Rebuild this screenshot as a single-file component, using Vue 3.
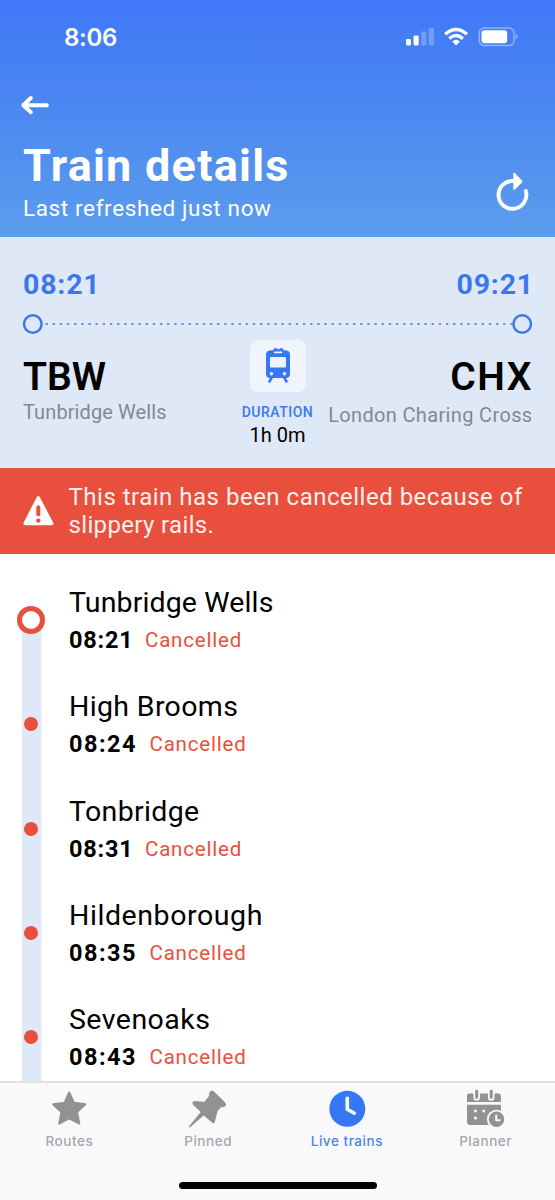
<script setup>
const stops = [
  { name: 'Tunbridge Wells', time: '08:21', cls: 'n1' },
  { name: 'High Brooms', time: '08:24', cls: 'n2' },
  { name: 'Tonbridge', time: '08:31', cls: 'n3' },
  { name: 'Hildenborough', time: '08:35', cls: 'n4' },
  { name: 'Sevenoaks', time: '08:43', cls: 'n5' },
]
</script>

<template>
  <div class="screen">
    <header class="header">
      <div class="status">
        <span class="clock">8:06</span>
        <svg class="status-icons" width="114" height="22" viewBox="0 0 114 22" fill="#fff">
          <rect x="1" y="13" width="5" height="6.5" rx="1.4" />
          <rect x="8.5" y="9.5" width="5.2" height="10" rx="1.4" />
          <g opacity=".25">
            <rect x="16.2" y="5.5" width="5.2" height="14" rx="1.4" />
            <rect x="23.8" y="2" width="5.2" height="17.5" rx="1.4" />
          </g>
          <g fill="none" stroke="#fff" stroke-width="3.4">
            <path d="M40.2 8.3Q51 -1.2 62 8.3" />
            <path d="M44.3 12.6Q51 6.6 57.9 12.6" />
          </g>
          <path d="M47.3 15.6Q51.1 12 54.9 15.6L51.1 19.6Z" />
          <rect x="74.2" y="2" width="34.8" height="17.6" rx="5" fill="none" stroke="#fff" stroke-opacity=".4" stroke-width="1.5" />
          <rect x="76.5" y="4.2" width="25.7" height="13.1" rx="3" />
          <path d="M110.6 7.8Q112.6 8.7 112.6 10.8T110.6 13.8Z" opacity=".4" />
        </svg>
      </div>
      <svg class="back" width="30" height="22" viewBox="0 0 30 22" fill="none" stroke="#fff" stroke-width="4" stroke-linecap="round" stroke-linejoin="round">
        <path d="M26.9 11.2H3.3M10.8 4L3.3 11.2L10.8 18.1" />
      </svg>
      <div class="title-row">
        <div>
          <h1 class="title">Train details</h1>
          <p class="subtitle">Last refreshed just now</p>
        </div>
        <svg class="refresh" width="34" height="40" viewBox="0 0 34 40">
          <path d="M29.8 19A13.9 13.9 0 1 1 17 9" fill="none" stroke="#fff" stroke-width="3.9" stroke-linecap="round" />
          <path d="M17.3 1.5V16.8Q17.5 18.6 18.9 17.5L26 10.4Q26.8 9.4 26 8.5L18.9 1.2Q17.5 .2 17.3 1.5Z" fill="#fff" />
        </svg>
      </div>
    </header>

    <section class="summary">
      <div class="times"><span>08:21</span><span>09:21</span></div>
      <svg class="track" width="511" height="22" viewBox="0 0 511 22" fill="none" stroke="#3b78ee">
        <path d="M23.5 11H501" stroke="#6f91dc" stroke-width="2.2" stroke-dasharray="2.4 4.75" />
        <circle cx="10.8" cy="11" r="8.8" stroke-width="2.5" />
        <circle cx="500.2" cy="11" r="8.8" stroke-width="2.5" fill="#dfe8f7" />
      </svg>
      <div class="places">
        <div class="place">
          <div class="code tbw">TBW</div>
          <div class="place-name tw">Tunbridge Wells</div>
        </div>
        <div class="duration">
          <div class="train-box">
            <svg width="26" height="36" viewBox="0 0 26 36">
              <path fill="#3478f6" d="M8.6 1Q8.6 .3 9.3 .3H12L12.8 1.3H14.3L15 .3H17.6Q18.2 .3 18.2 1L18 2L21.5 2.4Q25 3 25 6.5V26Q25 30 21 30H5Q1 30 1 26V6.5Q1 3 4.5 2.4L8.8 2Z" />
              <path d="M6.8 29.5L4 34.4M19.2 29.5L22 34.4" fill="none" stroke="#3478f6" stroke-width="2.6" />
              <rect x="9" y="3.4" width="8.4" height="1.8" rx=".9" fill="#eff4fd" />
              <rect x="5" y="9" width="16" height="10.4" rx="1" fill="#eff4fd" />
              <circle cx="6.5" cy="25.8" r="1.7" fill="#eff4fd" />
              <circle cx="19.5" cy="25.8" r="1.7" fill="#eff4fd" />
            </svg>
          </div>
          <div class="duration-label">DURATION</div>
          <div class="duration-value">1h 0m</div>
        </div>
        <div class="place right">
          <div class="code chx">CHX</div>
          <div class="place-name lcc">London Charing Cross</div>
        </div>
      </div>
    </section>

    <section class="alert">
      <svg class="warn" width="31" height="32" viewBox="0 0 31 32">
        <path d="M15.3 3L28.6 28.5H2.2Z" fill="#fff" stroke="#fff" stroke-width="3.6" stroke-linejoin="round" />
        <path d="M15.3 12.3V19.3" stroke="#e94f3d" stroke-width="4" stroke-linecap="round" />
        <circle cx="15.3" cy="25.6" r="2.2" fill="#e94f3d" />
      </svg>
      <p class="alert-text"><span class="a1">This train has been cancelled because of</span><br><span class="a2">slippery rails.</span></p>
    </section>

    <main class="stops">
      <div v-for="(s, i) in stops" :key="s.name" class="stop" :class="s.cls">
        <div class="rail" :class="{ first: i === 0 }"><i class="dot" /></div>
        <div class="stop-body">
          <div class="stop-name">{{ s.name }}</div>
          <div class="stop-line"><b class="stop-time">{{ s.time }}</b><span class="cancelled">Cancelled</span></div>
        </div>
      </div>
    </main>

    <nav class="tabs">
      <div class="tab">
        <svg width="40" height="40" viewBox="0 0 40 40"><path d="M20.2 3.5L25 13.8L36.3 15.2L28 23L30.3 34.6L20.2 29.4L10.2 34.6L12.4 23L4.1 15.2L15.4 13.8Z" fill="#929292" stroke="#929292" stroke-width="2" stroke-linejoin="round" /></svg>
        <span>Routes</span>
      </div>
      <div class="tab">
        <svg width="40" height="40" viewBox="0 0 40 40"><path d="M22 2.4Q23.6 .6 25.5 2L37.2 13.4Q39 16 36.8 17.6Q35.5 18.4 33.4 18L29.6 22Q28.6 26 27.2 31.5Q26.2 36 23.4 33L15.7 26.4L2.4 38Q.5 38.8 1.2 37L12.7 23L5.2 16Q3.2 13 6.4 12L16.3 12.7L21 7Q20.5 4.5 22 2.4Z" fill="#929292" /></svg>
        <span>Pinned</span>
      </div>
      <div class="tab active">
        <svg width="40" height="40" viewBox="0 0 40 40"><circle cx="20.3" cy="19.8" r="18" fill="#3478f6" /><path d="M20.3 9.2V20.3L27.3 24.2" fill="none" stroke="#fff" stroke-width="3.6" stroke-linecap="round" stroke-linejoin="round" /></svg>
        <span>Live trains</span>
      </div>
      <div class="tab">
        <svg width="40" height="40" viewBox="0 0 40 40">
          <path fill="#929292" d="M1 13V7Q1 4.6 3.4 4.6H32.5Q34.9 4.6 34.9 7V13ZM1 15.8H34.9V36H4Q1 36 1 33Z" />
          <path d="M10.7 1.5V8.5M25.2 1.5V8.5" stroke="#f9f9fc" stroke-width="6.6" stroke-linecap="round" />
          <path d="M10.7 2V8.3M25.2 2V8.3" stroke="#929292" stroke-width="3" stroke-linecap="round" />
          <g fill="#f9f9fc"><circle cx="9.5" cy="22" r="1.5" /><circle cx="17.7" cy="22" r="1.5" /><circle cx="9.5" cy="29" r="1.5" /></g>
          <circle cx="30.5" cy="30.3" r="9.6" fill="#f9f9fc" />
          <circle cx="30.5" cy="30.3" r="7.7" fill="#929292" />
          <path d="M30.2 26.5V31.3H33.7" fill="none" stroke="#f9f9fc" stroke-width="2" stroke-linecap="round" stroke-linejoin="round" />
        </svg>
        <span>Planner</span>
      </div>
      <div class="home-bar" />
    </nav>
  </div>
</template>

<style>
body { margin: 0; background: #fff; overflow: hidden; }
</style>

<style scoped>
* { box-sizing: border-box; }
.screen { width: 555px; height: 1200px; display: flex; flex-direction: column; overflow: hidden; font-family: Roboto, "Liberation Sans", sans-serif; color: #000; background: #fff; }
h1, p { margin: 0; }
span, .code, .place-name, .title, .subtitle, .stop-name { white-space: nowrap; }

.header { height: 237px; flex: none; background: linear-gradient(#4078f7, #4a86f1 42%, #5c9ded); color: #fff; }
.status { height: 74px; padding: 0 36px 0 64px; display: flex; justify-content: space-between; align-items: center; }
.clock { font: 600 24px/30px Inter, sans-serif; letter-spacing: -.3px; padding-top: 2px; }
.back { display: block; margin: 20px 0 0 20px; }
.title-row { display: flex; justify-content: space-between; padding: 26px 25px 0 23px; }
.title { font-size: 45px; line-height: 48px; font-weight: 700; letter-spacing: 1.25px; }
.subtitle { font-size: 22.5px; line-height: 28px; margin-top: 4px; letter-spacing: .63px; }
.refresh { margin-top: 30px; }

.summary { height: 231px; flex: none; background: #dfe8f7; padding: 30px 23px 0 22px; }
.times { display: flex; justify-content: space-between; padding-left: 1px; margin-right: -2px; font-size: 28.5px; line-height: 35px; font-weight: 700; color: #3b78ee; letter-spacing: .8px; }
.track { display: block; margin-top: 11px; }
.places { display: grid; grid-template-columns: 220px 71px 220px; padding-top: 5px; }
.place { padding: 14px 0 0 1px; }
.code { font-size: 39px; line-height: 46px; font-weight: 600; }
.chx { letter-spacing: 1.5px; }
.place-name { font-size: 20px; line-height: 24px; color: #84898f; }
.tw { letter-spacing: .1px; }
.right { display: flex; flex-direction: column; align-items: flex-end; }
.lcc { margin: 3px .5px 0 0; letter-spacing: .35px; }
.duration { display: flex; flex-direction: column; align-items: center; }
.train-box { width: 56px; height: 52px; border-radius: 8px; background: #eff4fd; display: flex; align-items: center; justify-content: center; }
.duration-label { margin-top: 11px; font-size: 14px; line-height: 18px; font-weight: 500; color: #3b78ee; letter-spacing: .5px; }
.duration-value { font-size: 20px; line-height: 24px; margin-top: 2px; }

.alert { height: 85.5px; flex: none; background: #e94f3d; color: #fff0ec; display: flex; padding: 14.5px 0 0 22.5px; }
.warn { margin: 12.5px 15px 0 0; }
.alert-text { font-size: 24px; line-height: 28.5px; }
.a1 { letter-spacing: .5px; }
.a2 { letter-spacing: .35px; }

.stops { flex: 1; min-height: 0; overflow: hidden; padding: 31.5px 0 0 17px; background: #fff; }
.stop { display: flex; height: 104.3px; }
.rail { width: 28px; margin-right: 24px; display: flex; justify-content: center; background: linear-gradient(#dfe8f7, #dfe8f7) 4.5px 0 / 19.5px 100% no-repeat; }
.dot { width: 14px; height: 14px; margin-top: 28px; border-radius: 50%; background: #e94f3d; }
.first { background-position: 4.5px 34px; }
.first .dot { width: 28px; height: 28px; margin-top: 21px; border: 5.5px solid #e94f3d; background: #fff; }
.stop-name { font-size: 28.5px; line-height: 36px; }
.stop-line { display: flex; align-items: baseline; line-height: 30px; margin-top: 4px; }
.stop-time { width: 80.5px; font-size: 23.5px; font-weight: 700; letter-spacing: 1.5px; }
.cancelled { font-size: 20.5px; color: #e94f3d; letter-spacing: .8px; transform: translateY(-1px); }
.n1 .stop-name { letter-spacing: .13px; }
.n2 .stop-name { letter-spacing: .35px; }
.n3 .stop-name { letter-spacing: .35px; }
.n4 .stop-name { letter-spacing: .58px; }
.n5 .stop-name { letter-spacing: .45px; }
.n1 .stop-time, .n3 .stop-time { width: 76px; letter-spacing: .8px; }

.tabs { position: relative; height: 119px; flex: none; border-top: 2px solid #e1e1e4; background: #f9f9fc; display: grid; grid-template-columns: repeat(4, 138.75px); padding-top: 6px; }
.tab { display: flex; flex-direction: column; align-items: center; font: 500 13.5px/20px Inter, sans-serif; color: #a6a6aa; letter-spacing: .55px; }
.tab svg { margin-bottom: 2px; }
.active { color: #4a84f0; }
.home-bar { position: absolute; left: 179px; bottom: 11px; width: 198px; height: 7.5px; border-radius: 4px; background: #000; }
</style>
